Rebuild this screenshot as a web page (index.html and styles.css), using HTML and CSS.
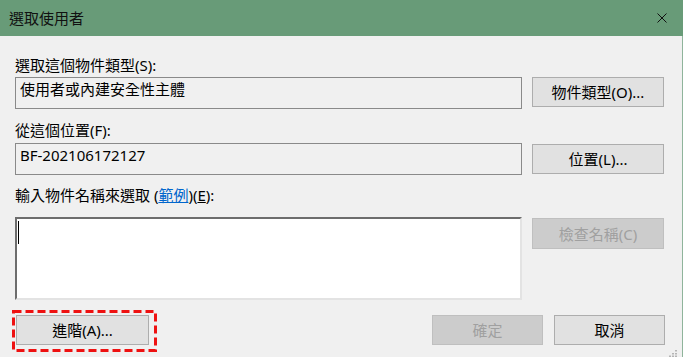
FILE: index.html
```html
<!DOCTYPE html>
<html lang="zh-Hant">
<head>
  <meta charset="UTF-8">
  <title>選取使用者</title>
  <link rel="stylesheet" href="styles.css">
</head>
<body>
  <div id="dialog">
    <div class="titlebar">
      <span class="title">選取使用者</span>
      <svg class="close" width="10" height="10" viewBox="0 0 10 10">
        <path d="M0.5 0.5L9.5 9.5M9.5 0.5L0.5 9.5" stroke="#111" stroke-width="1" fill="none"/>
      </svg>
    </div>

    <div class="content">
      <div class="label first">選取這個物件類型(S):</div>
      <div class="row">
        <div class="field">使用者或內建安全性主體</div>
        <button class="btn side">物件類型(O)...</button>
      </div>

      <div class="label second">從這個位置(F):</div>
      <div class="row">
        <div class="field">BF-202106172127</div>
        <button class="btn side">位置(L)...</button>
      </div>

      <div class="label third">輸入物件名稱來選取 (<a href="#">範例</a>)(<u>E</u>):</div>
      <div class="row">
        <div class="input"><span class="caret"></span></div>
        <button class="btn side check" disabled>檢查名稱(C)</button>
      </div>

      <div class="footer">
        <div class="mark">
          <button class="btn advanced">進階(A)...</button>
          <svg class="dash" width="145" height="42" viewBox="0 0 145 42">
            <rect x="1.5" y="1.5" width="142" height="39" fill="none" stroke="#ee1111" stroke-width="3" stroke-dasharray="8 4"/>
          </svg>
        </div>
        <button class="btn small ok" disabled>確定</button>
        <button class="btn small">取消</button>
      </div>

      <svg class="grip" width="9" height="7" viewBox="0 0 9 7">
        <rect x="7" y="0" width="2" height="1.5" fill="#b5b5b5"/>
        <rect x="4" y="3" width="2" height="1.5" fill="#b5b5b5"/>
        <rect x="7" y="3" width="2" height="1.5" fill="#b5b5b5"/>
        <rect x="1" y="5.5" width="2" height="1.5" fill="#b5b5b5"/>
        <rect x="4" y="5.5" width="2" height="1.5" fill="#b5b5b5"/>
        <rect x="7" y="5.5" width="2" height="1.5" fill="#b5b5b5"/>
      </svg>
    </div>
  </div>
</body>
</html>
```

FILE: styles.css
```css
*{
  margin: 0;
  padding: 0;
  box-sizing: border-box;
}

body{
  width: 683px;
  height: 357px;
  overflow: hidden;
  background: #f0f0f0;
  font-family: "Noto Sans", "Noto Sans CJK TC", sans-serif;
  font-size: 15px;
  color: #000;
}

#dialog{
  width: 683px;
  height: 357px;
  display: flex;
  flex-direction: column;
}

.titlebar{
  height: 36px;
  flex: none;
  background: #689b78;
  display: flex;
  align-items: center;
  justify-content: space-between;
  padding: 0 16px 0 9px;
}
.title{
  font-size: 15px;
  line-height: 20px;
  color: #111;
}
.close{
  display: block;
}

.content{
  flex: 1;
  position: relative;
  padding-left: 15px;
  border-right: 1px solid #8fb49b;
}

.label{
  height: 20px;
  line-height: 20px;
}
.label.first{
  margin-top: 19px;
}
.label.second{
  margin-top: 11px;
}
.label.third{
  margin-top: 10px;
}
.label a{
  color: #0066cc;
}

.row{
  display: flex;
  align-items: flex-start;
  margin-top: 2px;
}
.label.second + .row{
  margin-top: 3px;
}
.label.third + .row{
  margin-top: 12px;
}

.field{
  width: 507px;
  height: 32px;
  border: 1px solid #8a8a8a;
  padding: 1px 4px 0;
  line-height: 20px;
}

.input{
  width: 507px;
  height: 83px;
  background: #fff;
  border-top: 2px solid #6d6d6d;
  border-left: 2px solid #6d6d6d;
  border-right: 2px solid #e3e3e3;
  border-bottom: 2px solid #e3e3e3;
  padding: 2px 0 0 1px;
}
.caret{
  display: block;
  width: 1px;
  height: 23px;
  background: #000;
}

.btn{
  font-family: inherit;
  font-size: 15px;
  line-height: 20px;
  color: #000;
  background: #e1e1e1;
  border: 1px solid #adadad;
  height: 30px;
  padding: 0;
}
.btn:disabled{
  background: #cccccc;
  border-color: #bfbfbf;
  color: #a0a0a0;
}

.side{
  width: 132px;
  margin-left: 10px;
}
.check{
  height: 31px;
  margin-top: 1px;
}
.label.second + .row .side{
  margin-top: 1px;
}

.footer{
  display: flex;
  align-items: flex-start;
  margin-top: 10px;
}

.mark{
  position: relative;
  margin-left: -3px;
  padding: 5px 8px 7px 4px;
}
.advanced{
  width: 133px;
  display: block;
}
.dash{
  position: absolute;
  left: 0;
  top: 0;
}

.small{
  width: 111px;
  margin-top: 5px;
}
.ok{
  margin-left: 275px;
}
.ok + .small{
  margin-left: 11px;
}

.grip{
  position: absolute;
  right: 5px;
  bottom: 0;
}
```
